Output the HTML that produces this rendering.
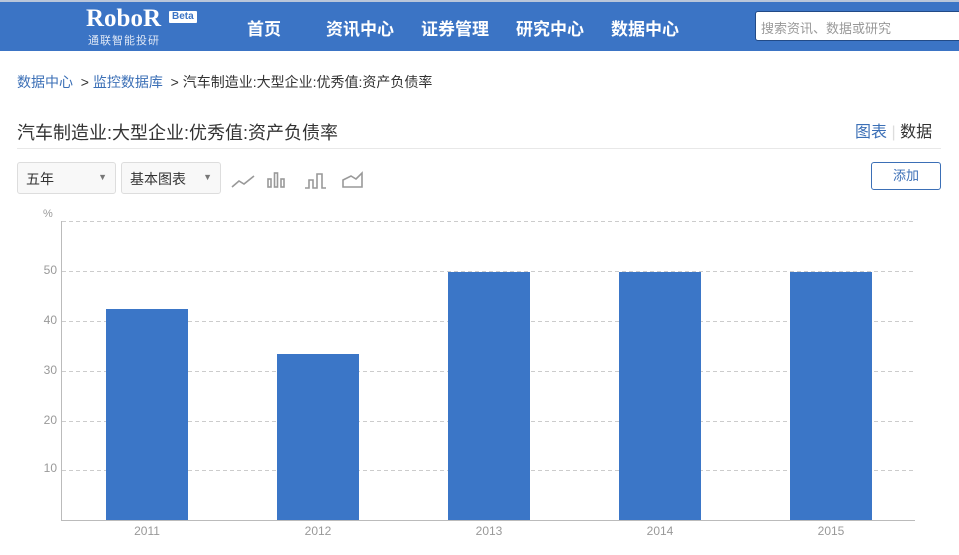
<!DOCTYPE html>
<html><head><meta charset="utf-8"><style>
*{margin:0;padding:0;box-sizing:border-box}
body{width:959px;height:555px;overflow:hidden;background:#fff;font-family:"Liberation Sans","Noto Sans CJK SC",sans-serif;position:relative}
.hd{position:absolute;left:0;top:0;width:959px;height:51px;background:#3b74c5;border-top:2px solid #b9c6da}
.abs{position:absolute;white-space:nowrap}
.nav{color:#fff;font-size:17px;font-weight:bold;top:15px}
</style></head><body>
<div class="hd"></div>
<div class="abs" style="left:86px;top:6px;color:#fff;font-family:'Liberation Serif',serif;font-weight:bold;font-size:25px;line-height:26px">RoboR</div>
<div class="abs" style="left:169px;top:11px;background:#fff;color:#3b74c5;font-size:10px;font-weight:bold;padding:0 3px;line-height:12px;border-radius:1px">Beta</div>
<div class="abs" style="left:88px;top:32px;color:#dde6f5;font-size:11px;letter-spacing:1px">通联智能投研</div>
<div class="abs nav" style="left:247px">首页</div>
<div class="abs nav" style="left:326px">资讯中心</div>
<div class="abs nav" style="left:421px">证券管理</div>
<div class="abs nav" style="left:516px">研究中心</div>
<div class="abs nav" style="left:611px">数据中心</div>
<div class="abs" style="left:755px;top:11px;width:220px;height:30px;background:#fff;border:1px solid #224a86;border-radius:3px;color:#999;font-size:13px;padding:6px 5px">搜索资讯、数据或研究</div>
<div class="abs" style="left:17px;top:72px;font-size:14px;color:#333"><span style="color:#3b6fb6">数据中心</span> &nbsp;&gt; <span style="color:#3b6fb6">监控数据库</span> &nbsp;&gt; 汽车制造业:大型企业:优秀值:资产负债率</div>
<div class="abs" style="left:17px;top:119px;font-size:18px;color:#333">汽车制造业:大型企业:优秀值:资产负债率</div>
<div class="abs" style="left:855px;top:118px;font-size:16px;color:#3b6fb6">图表 <span style="color:#ddd">|</span> <span style="color:#333">数据</span></div>
<div class="abs" style="left:17px;top:148px;width:924px;height:1px;background:#e8e8e8"></div>
<div class="abs" style="left:17px;top:162px;width:99px;height:32px;border:1px solid #ddd;border-radius:3px;background:#f8f8f8;font-size:14px;color:#333;padding:6px 8px">五年<span style="position:absolute;right:8px;top:9px;color:#777;font-size:9px">▼</span></div>
<div class="abs" style="left:121px;top:162px;width:100px;height:32px;border:1px solid #ddd;border-radius:3px;background:#f8f8f8;font-size:14px;color:#333;padding:6px 8px">基本图表<span style="position:absolute;right:8px;top:9px;color:#777;font-size:9px">▼</span></div>
<svg class="abs" style="left:225px;top:160px" width="150" height="40" fill="none" stroke="#999" stroke-width="1.6">
<path d="M7 27 L14 21 L19 24 L29 16"/>
<rect x="43" y="19" width="3" height="8"/><rect x="49.5" y="13" width="3" height="14"/><rect x="56" y="19" width="3" height="8"/>
<path d="M80 28 L84 28 L84 20 L88 20 L88 28 L92 28 L92 14 L97 14 L97 28 L101 28"/>
<path d="M118 27 L118 20 L126 16 L131 19 L137 13 L137 27 Z"/>
</svg>
<div class="abs" style="left:871px;top:162px;width:70px;height:28px;border:1px solid #3b6fb6;border-radius:3px;color:#3b6fb6;font-size:13px;text-align:center;line-height:26px">添加</div>
<svg class="abs" style="left:0;top:200px" width="959" height="355" font-family="Liberation Sans, sans-serif" font-size="11" fill="#999">
<text x="43" y="17">%</text>
<g stroke="#ccc" stroke-dasharray="4,3">
<line x1="62" y1="21.5" x2="915" y2="21.5"/><line x1="62" y1="71.5" x2="915" y2="71.5"/><line x1="62" y1="121.5" x2="915" y2="121.5"/><line x1="62" y1="171.5" x2="915" y2="171.5"/><line x1="62" y1="221.5" x2="915" y2="221.5"/><line x1="62" y1="270.5" x2="915" y2="270.5"/>
</g>
<g fill="#3b76c7">
<rect x="106" y="109" width="82" height="211"/><rect x="277" y="154" width="82" height="166"/><rect x="448" y="72" width="82" height="248"/><rect x="619" y="72" width="82" height="248"/><rect x="790" y="72" width="82" height="248"/>
</g>
<line x1="61.5" y1="21" x2="61.5" y2="320" stroke="#bbb"/>
<line x1="61" y1="320.5" x2="915" y2="320.5" stroke="#bbb"/>
<g text-anchor="end" font-size="12"><text x="57" y="74">50</text><text x="57" y="124">40</text><text x="57" y="174">30</text><text x="57" y="224">20</text><text x="57" y="272">10</text></g>
<g text-anchor="middle" font-size="12"><text x="147" y="335">2011</text><text x="318" y="335">2012</text><text x="489" y="335">2013</text><text x="660" y="335">2014</text><text x="831" y="335">2015</text></g>
</svg>
</body></html>
